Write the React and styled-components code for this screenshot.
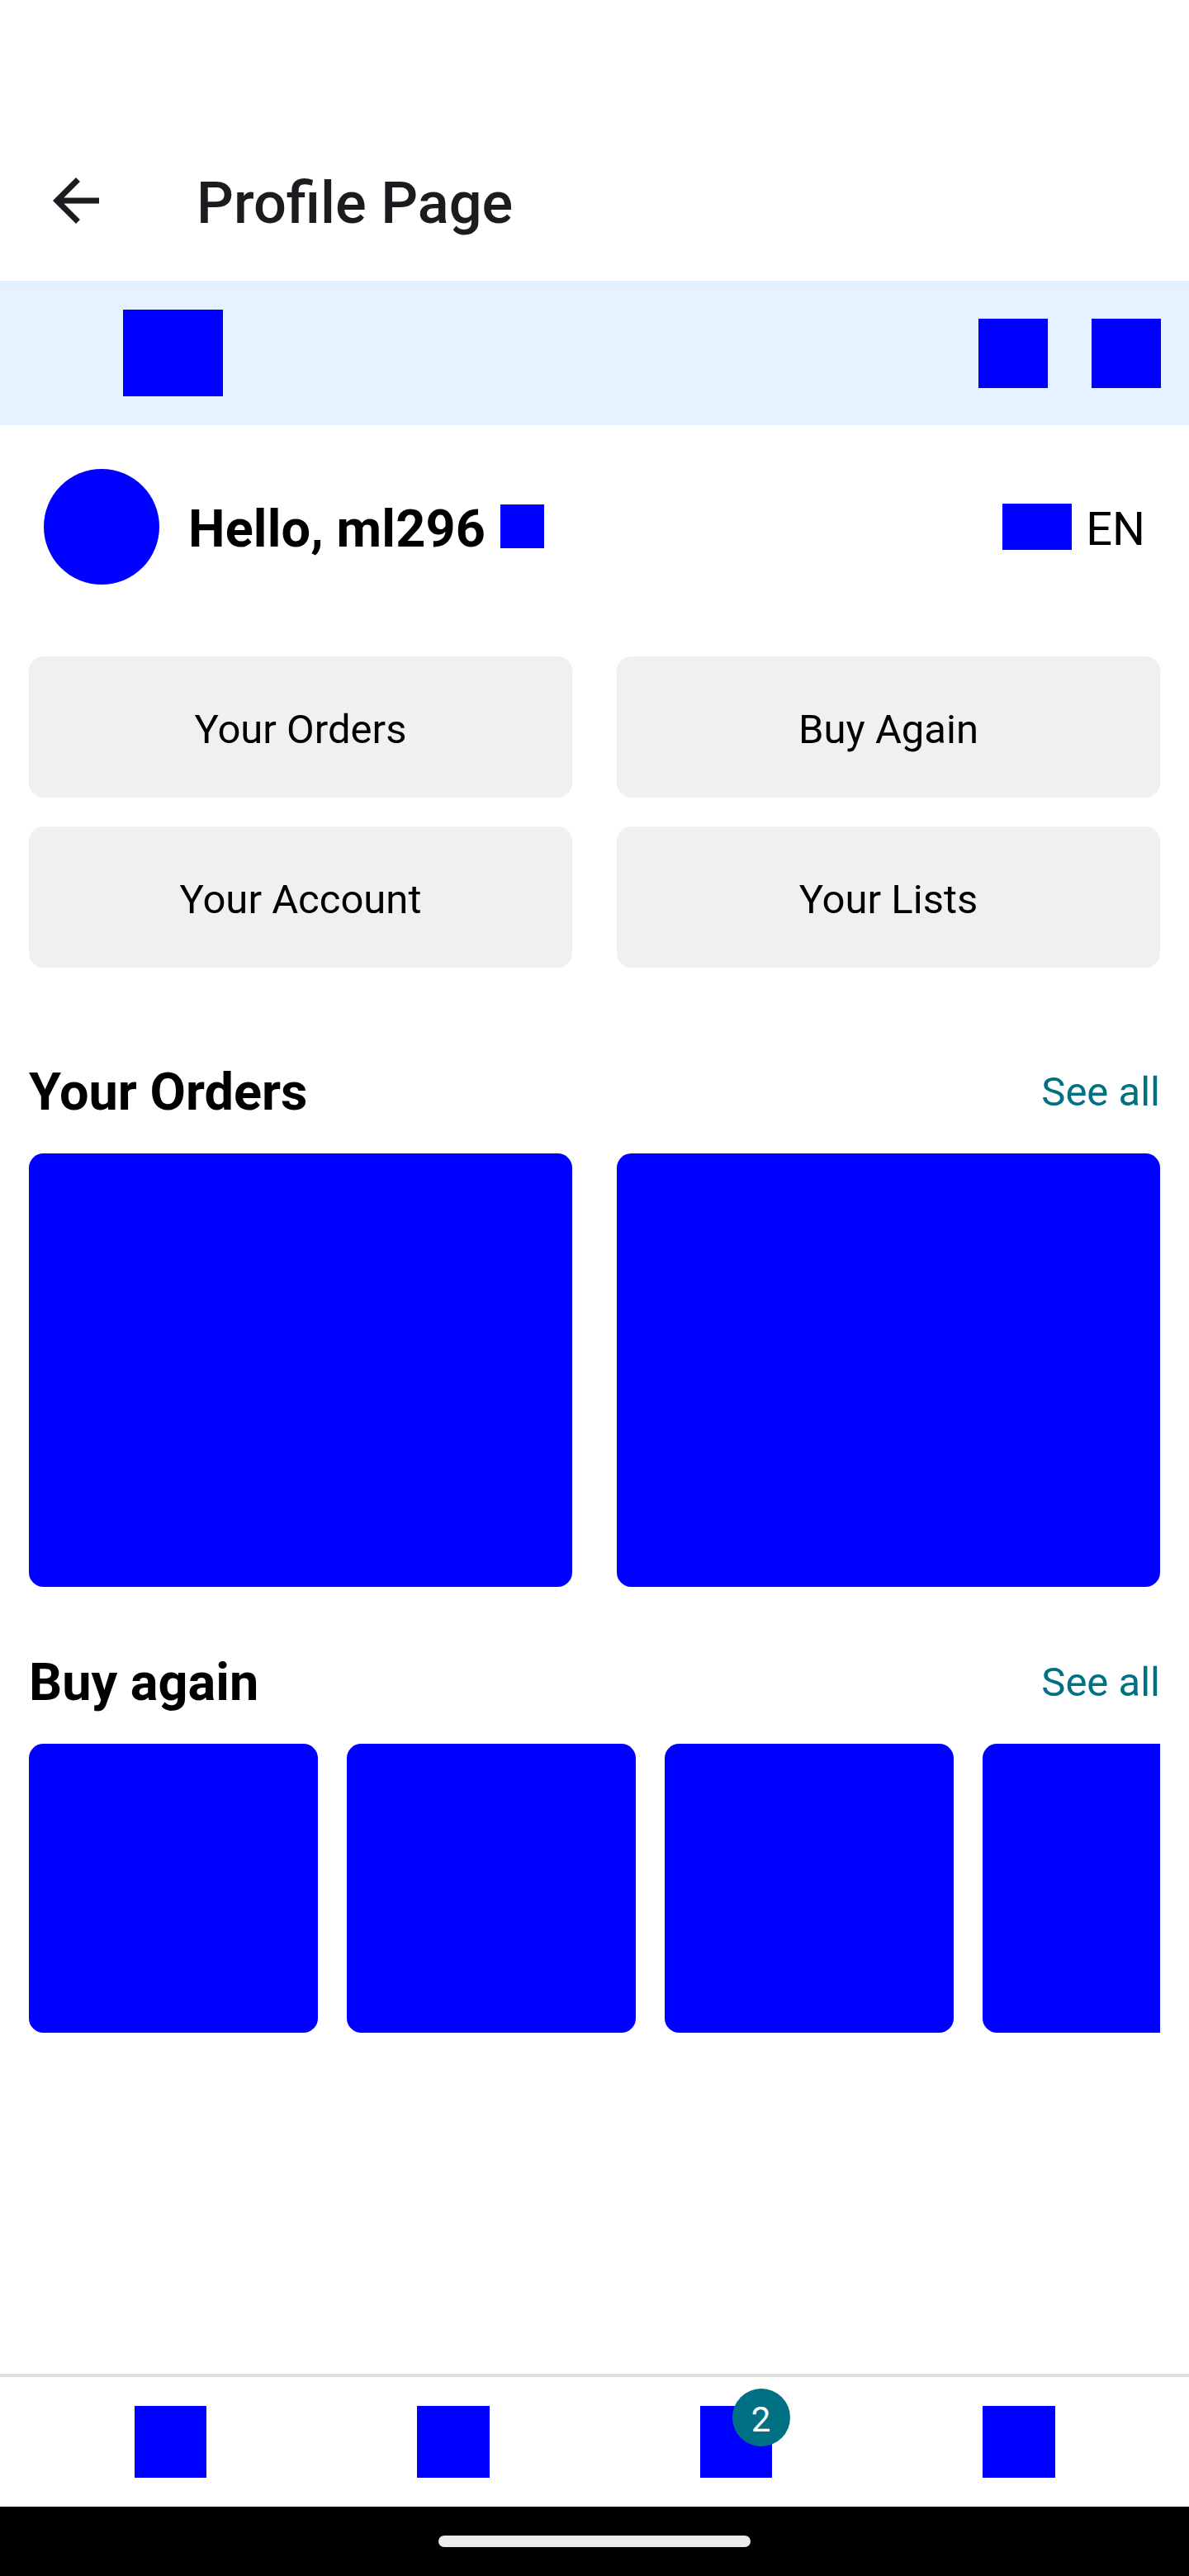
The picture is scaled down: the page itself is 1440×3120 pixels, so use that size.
import React from 'react';
import styled, { createGlobalStyle } from 'styled-components';

const GlobalStyle = createGlobalStyle`
  *, *::before, *::after { box-sizing: border-box; }
  body {
    margin: 0;
    background: #fff;
    font-family: Roboto, "Liberation Sans", sans-serif;
    color: #000;
  }
`;

const PLACEHOLDER = '#0000ff';
const TEAL = '#007185';

const Screen = styled.div`
  display: flex;
  flex-direction: column;
  width: 1440px;
  height: 3120px;
  background: #fff;
  overflow: hidden;
`;

const AppBar = styled.header`
  display: flex;
  align-items: center;
  height: 340px;
  padding: 145px 50px 0;
  gap: 104px;
  color: #1c1b1f;
`;

const BackIcon = styled.svg`
  flex: none;
  width: 84px;
  height: 84px;
  fill: currentColor;
`;

/* Uneven vertical padding reproduces Android's font padding. */
const Label = styled.span`
  display: block;
  margin: 0;
  padding: 0.129em 0 0.027em;
  font-size: ${(p) => p.$size}px;
  font-weight: ${(p) => p.$weight || 400};
  letter-spacing: ${(p) => (p.$tracking ? `${p.$tracking}px` : 'normal')};
  line-height: 1.172;
  white-space: nowrap;
`;

const BodyLabel = styled(Label)`
  padding-top: 0.165em;
`;

const Placeholder = styled.div`
  flex: none;
  width: ${(p) => p.$w}px;
  height: ${(p) => p.$h}px;
  background: ${PLACEHOLDER};
`;

const Banner = styled.div`
  display: flex;
  align-items: center;
  justify-content: space-between;
  height: 175px;
  padding: 0 34px 0 149px;
  background: linear-gradient(#e2effc 0, #e6f2ff 20px);
`;

const BannerActions = styled.div`
  display: flex;
  gap: 53px;
`;

const ProfileRow = styled.section`
  display: flex;
  align-items: center;
  justify-content: space-between;
  height: 246px;
  padding: 0 53px;
`;

const Identity = styled.div`
  display: flex;
  align-items: center;
`;

const Avatar = styled.div`
  width: 140px;
  height: 140px;
  margin-right: 35px;
  border-radius: 50%;
  background: ${PLACEHOLDER};
`;

const Greeting = styled.div`
  display: flex;
  align-items: center;
  gap: 18px;
`;

const Language = styled(Greeting)`
  gap: 17px;
`;

const Content = styled.main`
  flex: 1;
  padding: 34px 35px 0;
`;

const Shortcuts = styled.nav`
  display: grid;
  grid-template-columns: 1fr 1fr;
  gap: 35px 54px;
`;

const Shortcut = styled.button`
  display: flex;
  align-items: center;
  justify-content: center;
  height: 171px;
  padding: 0;
  border: 0;
  border-radius: 17.5px;
  background: #f0f0f0;
  color: inherit;
  font-family: inherit;
`;

const Section = styled.section`
  margin-top: ${(p) => p.$gap}px;
`;

const SectionHead = styled.div`
  display: flex;
  align-items: center;
  justify-content: space-between;
  height: 79px;
  margin-bottom: 38px;
`;

const SeeAll = styled.a`
  color: ${TEAL};
`;

const Orders = styled.div`
  display: grid;
  grid-template-columns: 1fr 1fr;
  gap: 54px;
`;

const OrderCard = styled.div`
  height: 525px;
  border-radius: 17.5px;
  background: ${PLACEHOLDER};
`;

const Carousel = styled.div`
  display: flex;
  gap: 35px;
  overflow: hidden;
`;

const ProductCard = styled.div`
  flex: none;
  width: 350px;
  height: 350px;
  border-radius: 17.5px;
  background: ${PLACEHOLDER};
`;

const TabBar = styled.nav`
  display: flex;
  justify-content: space-around;
  height: 161px;
  padding: 35px 35px 0;
  border-top: 4px solid #dfdfdf;
`;

const Tab = styled.div`
  position: relative;
`;

const Badge = styled.div`
  position: absolute;
  top: -21px;
  left: 39px;
  display: flex;
  align-items: center;
  justify-content: center;
  width: 70px;
  height: 70px;
  border-radius: 50%;
  background: ${TEAL};
  color: #fff;
`;

const SystemBar = styled.footer`
  display: flex;
  align-items: center;
  justify-content: center;
  height: 84px;
  background: #000;
`;

const HomeHandle = styled.div`
  width: 378px;
  height: 14px;
  border-radius: 7px;
  background: #ebebeb;
`;

const shortcuts = ['Your Orders', 'Buy Again', 'Your Account', 'Your Lists'];
const tabs = [{ id: 'home' }, { id: 'profile' }, { id: 'cart', count: 2 }, { id: 'menu' }];

function SectionTitle({ children }) {
  return (
    <SectionHead>
      <Label as="h2" $size={63} $weight={700}>{children}</Label>
      <SeeAll>
        <BodyLabel $size={49}>See all</BodyLabel>
      </SeeAll>
    </SectionHead>
  );
}

export default function App() {
  return (
    <>
      <GlobalStyle />
      <Screen>
        <AppBar>
          <BackIcon viewBox="0 0 24 24">
            <path d="M20 11H7.83l5.59-5.59L12 4l-8 8 8 8 1.41-1.41L7.83 13H20v-2z" />
          </BackIcon>
          <Label as="h1" $size={70.4} $weight={500}>Profile Page</Label>
        </AppBar>

        <Banner>
          <Placeholder $w={121} $h={105} />
          <BannerActions>
            <Placeholder $w={84} $h={84} />
            <Placeholder $w={84} $h={84} />
          </BannerActions>
        </Banner>

        <ProfileRow>
          <Identity>
            <Avatar />
            <Greeting>
              <Label $size={63} $weight={700} $tracking={0.15}>Hello, ml296</Label>
              <Placeholder $w={53} $h={53} />
            </Greeting>
          </Identity>
          <Language>
            <Placeholder $w={84} $h={56} />
            <BodyLabel $size={56}>EN</BodyLabel>
          </Language>
        </ProfileRow>

        <Content>
          <Shortcuts>
            {shortcuts.map((name) => (
              <Shortcut key={name}>
                <BodyLabel $size={49}>{name}</BodyLabel>
              </Shortcut>
            ))}
          </Shortcuts>

          <Section $gap={108}>
            <SectionTitle>Your Orders</SectionTitle>
            <Orders>
              <OrderCard />
              <OrderCard />
            </Orders>
          </Section>

          <Section $gap={73}>
            <SectionTitle>Buy again</SectionTitle>
            <Carousel>
              {[0, 1, 2, 3].map((i) => (
                <ProductCard key={i} />
              ))}
            </Carousel>
          </Section>
        </Content>

        <TabBar>
          {tabs.map(({ id, count }) => (
            <Tab key={id}>
              <Placeholder $w={87.5} $h={87} />
              {count && (
                <Badge>
                  <Label $size={42}>{count}</Label>
                </Badge>
              )}
            </Tab>
          ))}
        </TabBar>

        <SystemBar>
          <HomeHandle />
        </SystemBar>
      </Screen>
    </>
  );
}
